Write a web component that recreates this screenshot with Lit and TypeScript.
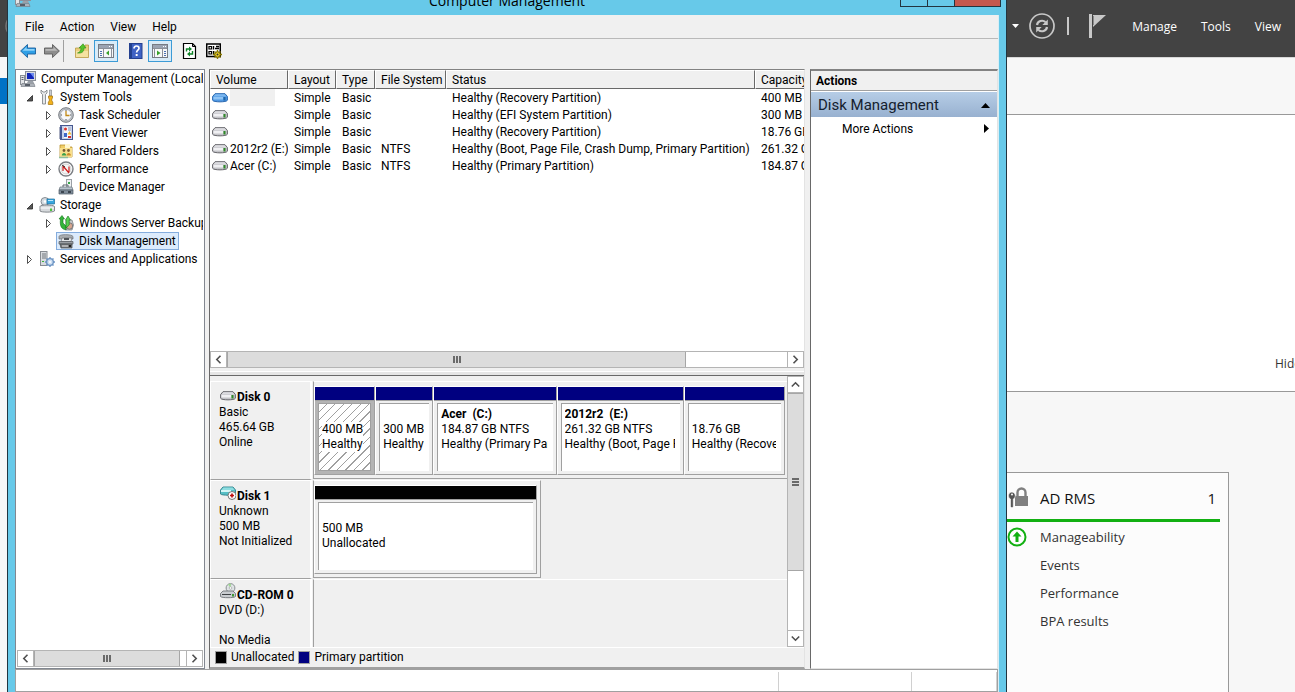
import { LitElement, html, svg, css, nothing } from "lit";
import { customElement, property } from "lit/decorators.js";
import { styleMap } from "lit/directives/style-map.js";
import { classMap } from "lit/directives/class-map.js";

const reset = css`
  * { box-sizing: border-box; }
  button, a {
    font: inherit;
    color: inherit;
    background: none;
    border: 0;
    padding: 0;
    margin: 0;
    text-align: left;
    text-decoration: none;
    white-space: nowrap;
    cursor: default;
  }
  svg { display: block; flex: none; }
  ul { list-style: none; margin: 0; padding: 0; }
`;

const icon = (body: unknown, w = 16, h = 16) =>
  html`<svg width=${w} height=${h} viewBox="0 0 ${w} ${h}" aria-hidden="true">${body}</svg>`;

const icons: Record<string, unknown> = {
  computer: svg`
    <rect x="5.5" y=".5" width="10" height="9" fill="#d9dce2" stroke="#8b909a"/>
    <rect x="7" y="2" width="7" height="6" fill="#1326b8"/><path d="M10 2h4v5z" fill="#6f8cf0"/>
    <path d="M8 10h5l1 2H7z" fill="#9aa0a8"/>
    <rect x=".5" y="4.500" width="4" height="9" fill="#e4e6e9" stroke="#8a8f96"/><path d="M1.500 6.500h2M1.500 8.500h2" stroke="#59606a"/>
    <path d="M2 12.500h12l1 3H1z" fill="#aeb3ba" stroke="#70757d" stroke-width=".6"/><path d="M5 13h5v2H5z" fill="#585e68"/>`,
  tools: svg`
    <path d="M2 1v3l1.500 1.500V15h3V5.500L8 4V1L6 3H4z" fill="#e6e8ea" stroke="#777c82" stroke-width=".8"/>
    <path d="M10.500 1h2v6h-2z" fill="#c9ccd0" stroke="#777c82" stroke-width=".6"/>
    <path d="M9.500 7h4v2l-.7 1v2l1 1v2.500h-4.500V13l1-1v-2l-.8-1z" fill="#f3b21c" stroke="#a06f0a" stroke-width=".7"/>`,
  clock: svg`
    <circle cx="8" cy="8" r="7.300" fill="#c3c7cc" stroke="#74787e"/>
    <circle cx="8" cy="8" r="5.600" fill="#f6f8fb" stroke="#8e949c" stroke-width=".6"/>
    <path d="M8 4v4.500h3.500" fill="none" stroke="#c28a17" stroke-width="1.300"/><path d="M8 3v1M8 12v1M3 8h1M12 8h1" stroke="#555"/>`,
  events: svg`
    <rect x="2.500" y=".5" width="12" height="14" fill="#c9d3ea" stroke="#47588f"/>
    <path d="M2 1h2v13H2z" fill="#5a6fb5"/><path d="M1 3h3M1 5h3M1 7h3M1 9h3M1 11h3M1 13h3" stroke="#263462" stroke-width=".8"/>
    <path d="M6 2h7v11H6z" fill="#f4f6fb"/><circle cx="7.500" cy="4" r="1.500" fill="#d8322b"/><path d="M10 3h3M10 5h3" stroke="#7f8db5"/>
    <path d="M11.500 6l2 3.500h-4z" fill="#f1b929"/><path d="M6 8h3v4H6z" fill="#3f68c9"/><path d="M10 11h3v2h-3z" fill="#d8322b"/>`,
  shared: svg`
    <path d="M2 2h5l1 2h6v10H2z" fill="#f0ce66" stroke="#b78f2c" stroke-width=".8"/><path d="M7 1h5v4H7z" fill="#fff7cf"/>
    <path d="M2 5h12v9H2z" fill="#f8df8c"/>
    <circle cx="6" cy="7.500" r="1.400" fill="#7b5c33"/><circle cx="10.500" cy="7.500" r="1.400" fill="#7b5c33"/>
    <path d="M3.800 12.500c0-3.500 4.400-3.500 4.400 0z" fill="#3aa04b"/><path d="M8.500 12.500c0-3.500 4.400-3.500 4.400 0z" fill="#c98a2a"/>
    <path d="M1 14.500h9" stroke="#8fbf9f" stroke-width="1.500"/>`,
  perf: svg`
    <circle cx="8" cy="8" r="7" fill="#fff" stroke="#7b7e83" stroke-width="1.400"/>
    <circle cx="8" cy="8" r="5" fill="#f5f5f5" stroke="#aaa" stroke-width=".5"/>
    <path d="M5 10V5M5 5l6 7M11 11V5.500" stroke="#cc1d1d" stroke-width="1.200" fill="none"/><path d="M4 4l3 2" stroke="#333"/>`,
  device: svg`
    <rect x="8.500" y=".5" width="5" height="8" fill="#eef0f2" stroke="#9ba0a6"/><rect x="10" y="3" width="2" height="2" fill="#38a748"/>
    <path d="M5 8V6h5v2" fill="none" stroke="#5d666f"/>
    <path d="M2 8h12l1 3H1z" fill="#b9c3cc" stroke="#6b757f" stroke-width=".7"/>
    <path d="M1 11h14v4H1z" fill="#7f8c99" stroke="#4d5964" stroke-width=".7"/><path d="M3 12h3v2H3zM10 12h3v2h-3z" fill="#3c4650"/>`,
  storage: svg`
    <circle cx="6" cy="4.500" r="4" fill="#d5dce2" stroke="#858c93"/><circle cx="6" cy="4.500" r="1.300" fill="#fff"/>
    <path d="M8 2h7.500v5H8z" fill="#39a7dd" stroke="#1c6d9b" stroke-width=".7"/><path d="M9 3h5v1H9z" fill="#bfe7fa"/>
    <path d="M1 9.500c0-2 13-2 14.500 0V14c-1 1.500-13.500 1.500-14.500 0z" fill="#d6d9dc" stroke="#6a6f75" stroke-width=".8"/>
    <path d="M1.500 11h13.500" stroke="#fff"/><rect x="11" y="11.500" width="2" height="2.500" fill="#4cc43f"/>`,
  backup: svg`
    <path d="M8 5h6l1.500 5-1.500 5H8z" fill="#c6c9cd" stroke="#74787d" stroke-width=".7"/><circle cx="11.500" cy="11" r="3.200" fill="#d6a58e" stroke="#6b6e72" stroke-width=".8"/>
    <path d="M1 4l3-3.500L6.500 4H5v4l3 3v4C4 14 1.500 12 2.500 4z" fill="#33b53a" stroke="#15701c" stroke-width=".6"/>
    <path d="M7.500 5L10 1l2.500 4h-1.300v5L8 13V5z" fill="#57d151" stroke="#15701c" stroke-width=".6"/>`,
  disks: svg`
    <path d="M1 3.500C1 1 14 1 15 3.500V6H1z" fill="#a8acb0" stroke="#6d7175" stroke-width=".7"/>
    <path d="M4 5h10l-1 3.500H3z" fill="#e4e6e8" stroke="#6d7175" stroke-width=".7"/><path d="M6 5h5v2H6z" fill="#505459"/>
    <path d="M1 8.500h14V11H1z" fill="#9a9ea3" stroke="#55595e" stroke-width=".7"/>
    <path d="M2 11h12v4H3z" fill="#77797c" stroke="#44474a" stroke-width=".7"/><path d="M4 13h6" stroke="#e8e8e8"/><rect x="11" y="12" width="2" height="2" fill="#222"/>`,
  services: svg`
    <rect x="1.500" y=".5" width="6.500" height="14" fill="#d8dbdf" stroke="#878c92"/><path d="M3 3h4M3 5h4M3 7h4" stroke="#70767d"/><rect x="3" y="10" width="2" height="1" fill="#3eb03a"/>
    <circle cx="11" cy="11" r="3.300" fill="#cfe0f3" stroke="#6b93c3" stroke-width="1.300"/>
    <path d="M11 6v2M11 14v2M6 11h2M14 11h2M7.500 7.500l1.300 1.300M13.200 13.200l1.300 1.300M14.500 7.500l-1.300 1.300M8.800 13.200l-1.300 1.300" stroke="#6b93c3" stroke-width="1.300"/><circle cx="11" cy="11" r="1" fill="#fff"/>`,
  back: svg`<path d="M7.500 1.500L.6 8l6.900 6.500V11h8V5h-8z" fill="#2f9fe6" stroke="#1b5f9c" stroke-width=".9" stroke-linejoin="round"/><path d="M6.500 4L2.600 7.700H14.500V6h-8z" fill="#8fd4fa"/>`,
  forward: svg`<path d="M8.500 1.500L15.400 8l-6.900 6.500V11h-8V5h8z" fill="#8d8d8d" stroke="#5c5c5c" stroke-width=".9" stroke-linejoin="round"/><path d="M9.500 4l3.900 3.700H1.500V6h8z" fill="#b9b9b9"/>`,
  folderUp: svg`<path d="M1.500 5h4l1-1.500H11V2h3.500v12.500h-13z" fill="#e9cf7d" stroke="#b99a45" stroke-width=".8"/><path d="M2 8h12v6H2z" fill="#f5e2a0"/><path d="M3.500 10c2-.5 3.500-2 3.500-5H5L9 .8 12 5h-2c0 4-2.500 5.500-6.500 5z" fill="#55c42c" stroke="#2d8a17" stroke-width=".6"/>`,
  paneLeft: svg`<rect x=".5" y="1.500" width="15" height="13" fill="#f7f8f9" stroke="#767b84"/><path d="M1 2h14v3H1z" fill="#9aa3b2"/><path d="M11 3.500h1M13 3.500h1" stroke="#fff"/><path d="M1 5.500h14M5.500 6v8M13.500 6v8" stroke="#8b9099"/><path d="M2 8.500h2M2 10.500h2M2 12.500h2" stroke="#4a70b0"/><path d="M11 7.500v5l-3-2.500z" fill="#37a02b"/>`,
  paneRight: svg`<rect x=".5" y="1.500" width="15" height="13" fill="#f7f8f9" stroke="#767b84"/><path d="M1 2h14v3H1z" fill="#9aa3b2"/><path d="M11 3.500h1M13 3.500h1" stroke="#fff"/><path d="M1 5.500h14M2.500 6v8M10.500 6v8" stroke="#8b9099"/><path d="M12 8.500h2M12 10.500h2M12 12.500h2" stroke="#4a70b0"/><path d="M5 7.500v5l3.500-2.500z" fill="#37a02b"/>`,
  help: svg`<rect x="1.500" y=".5" width="12.500" height="15" fill="#3f62c4" stroke="#24408f"/><path d="M2 1h2v14H2z" fill="#23418f"/><path d="M6 5.500c0-3.300 5-3.300 5-.3 0 2-2.400 2.100-2.400 4.300" fill="none" stroke="#fff" stroke-width="1.700"/><rect x="7.700" y="11" width="1.900" height="2" fill="#fff"/>`,
  refresh: svg`<path d="M1.500.5h9l3 3v12h-12z" fill="#fff" stroke="#000" stroke-width="1.200"/><path d="M10.500.5v3h3" fill="none" stroke="#000"/><path d="M4.500 8.500V6H8M10.500 8v3H7" fill="none" stroke="#11852a" stroke-width="1.400"/><path d="M7 3.500v5L10 6zM8 8.500v5L5 11z" fill="#11852a"/>`,
  settings: svg`<rect x=".75" y="1" width="13.500" height="12.500" fill="#fff" stroke="#000" stroke-width="1.500"/><path d="M3 3.500h2.500V6H3zM3 8.500h2.500V11H3z" fill="#fff" stroke="#000" stroke-width="1.200"/><path d="M7.500 3v3.500M10 3.500h3M7.500 8v4M9 5.500h4" stroke="#000" stroke-width="1.400"/><circle cx="11.500" cy="11.500" r="2.800" fill="#f0d322" stroke="#4b4300"/><path d="M11.500 7v2M11.500 14v2M7 11.500h2M14 11.500h2M8.500 8.500l1.200 1.200M13.300 13.300l1.300 1.300M14.500 8.500l-1.200 1.200M9.700 13.300l-1.200 1.300" stroke="#8d7c00" stroke-width="1.400"/><circle cx="11.500" cy="11.500" r="1" fill="#333"/>`,
};

const drive = (selected = false) => icon(svg`
  <path d="M3 .7h10L15.400 3.500v3.700c-.6 2.200-14.200 2.200-14.800 0V3.500z" fill=${selected ? "#4f98e3" : "#c3c3c8"} stroke=${selected ? "#2c69b0" : "#66666b"}/>
  <path d="M3.500 1.200h9L14.500 3.500h-13z" fill=${selected ? "#7db8f0" : "#dcdce0"}/>
  <path d="M1.400 4h9.600v2.500H1.400z" fill=${selected ? "#8fc4f5" : "#f0f0f3"}/>
  <rect x="11.500" y="4" width="2" height="3.500" fill=${selected ? "#1f66a8" : "#2f8a28"}/>`, 16, 10);

const diskUnknown = icon(svg`
  <path d="M3 1h10l2.500 3v4c-1 1.600-14 1.600-15 0V4z" fill="#56bfc6" stroke="#2f7f88" stroke-width=".9"/>
  <path d="M3.300 1.500h9.400L14.500 4h-13z" fill="#8edde0"/><path d="M1 5h10" stroke="#d4f6f6" stroke-width="2"/>
  <circle cx="12" cy="9.500" r="4" fill="#fff" stroke="#777"/><path d="M12 7.500v4M10 9.500h4" stroke="#c01010" stroke-width="1.700"/>`, 16, 14);

const cdrom = icon(svg`
  <circle cx="10.500" cy="5" r="4.400" fill="#dfe4e6" stroke="#8b9094"/><path d="M10.500 5L8 1.500a4 4 0 0 1 3-.8z" fill="#9ed88f"/><circle cx="10.500" cy="5" r="1.300" fill="#fff" stroke="#999" stroke-width=".6"/>
  <path d="M3 8h10l2.500 2.500v3c-1 1.600-14 1.600-15 0v-3z" fill="#c9ccd0" stroke="#717479" stroke-width=".9"/>
  <path d="M2 11.500h9" stroke="#3e4145"/><rect x="12" y="11" width="2" height="2.500" fill="#3f9a35"/>`, 16, 16);

const chevron = (d: string) => html`<svg width="9" height="9" viewBox="0 0 9 9" aria-hidden="true"><path d=${d} fill="none" stroke="#505050" stroke-width="1.600"/></svg>`;
const chevrons = {
  left: chevron("M6.500 .8L2.800 4.500l3.700 3.700"),
  right: chevron("M2.500 .8l3.700 3.700-3.700 3.700"),
  up: chevron("M.8 6.500L4.500 2.800l3.700 3.700"),
  down: chevron("M.8 2.500l3.700 3.700 3.700-3.700"),
};

/** Scroll bar with two arrow buttons, a thumb and the remaining track. */
@customElement("scroll-bar")
class ScrollBar extends LitElement {
  @property({ type: Boolean, reflect: true }) vertical = false;
  @property({ type: Number }) ratio = 1;

  static styles = [reset, css`
    :host { display: flex; height: 17px; flex: none; background: #fff; }
    :host([vertical]) { flex-direction: column; width: 17px; height: auto; }
    button, .thumb { display: flex; align-items: center; justify-content: center; border: 1px solid #b4b4b4; }
    button { flex: none; width: 17px; height: 17px; background: #fff; }
    .track { flex: 1; display: flex; min-width: 0; min-height: 0; border: solid #b4b4b4; border-width: 1px 0; }
    :host([vertical]) .track { flex-direction: column; border-width: 0 1px; }
    .thumb { background: #dcdcdc; border-color: #a6a6a6; border-width: 0 1px; gap: 1px; }
    :host([vertical]) .thumb { flex-direction: column; border-width: 1px 0; }
    .grip { width: 2px; height: 7px; background: #6a6a6a; }
    :host([vertical]) .grip { width: 7px; height: 2px; }
  `];

  render() {
    return html`
      <button aria-label="Scroll back">${this.vertical ? chevrons.up : chevrons.left}</button>
      <div class="track">
        <div class="thumb" style=${styleMap({ flexBasis: `${this.ratio}%` })}>
          <span class="grip"></span><span class="grip"></span><span class="grip"></span>
        </div>
      </div>
      <button aria-label="Scroll forward">${this.vertical ? chevrons.down : chevrons.right}</button>`;
  }
}

interface Node { label: string; icon: string; level: number; open?: boolean; selected?: boolean }
const tree: Node[] = [
  { label: "Computer Management (Local)", icon: "computer", level: 0 },
  { label: "System Tools", icon: "tools", level: 1, open: true },
  { label: "Task Scheduler", icon: "clock", level: 2, open: false },
  { label: "Event Viewer", icon: "events", level: 2, open: false },
  { label: "Shared Folders", icon: "shared", level: 2, open: false },
  { label: "Performance", icon: "perf", level: 2, open: false },
  { label: "Device Manager", icon: "device", level: 2 },
  { label: "Storage", icon: "storage", level: 1, open: true },
  { label: "Windows Server Backup", icon: "backup", level: 2, open: false },
  { label: "Disk Management", icon: "disks", level: 2, selected: true },
  { label: "Services and Applications", icon: "services", level: 1, open: false },
];

@customElement("console-tree")
class ConsoleTree extends LitElement {
  static styles = [reset, css`
    :host { display: flex; flex-direction: column; background: #fff; border: 1px solid #828790; padding: 0 1px 1px; overflow: hidden; }
    ul { flex: 1; overflow: hidden; }
    li { display: flex; align-items: center; height: 18px; }
    .l0 { padding-left: 1px; }
    .l1 { padding-left: 6px; }
    .l2 { padding-left: 25px; }
    .twist { flex: none; display: flex; justify-content: center; width: 14px; }
    .node { display: flex; align-items: center; gap: 5px; height: 18px; padding: 0 2px 0 1px; border: 1px solid transparent; }
    .node.on { background: #dcebfc; border-color: #84acdd; }
  `];

  render() {
    return html`
      <ul role="tree">
        ${tree.map((n) => html`
          <li class="l${n.level}" role="treeitem" aria-selected=${n.selected ? "true" : "false"}>
            ${n.level ? html`<span class="twist">${this.twist(n)}</span>` : nothing}
            <button class=${classMap({ node: true, on: !!n.selected })}>${icon(icons[n.icon])}<span>${n.label}</span></button>
          </li>`)}
      </ul>
      <scroll-bar .ratio=${96}></scroll-bar>`;
  }

  private twist(n: Node) {
    if (n.open === undefined) return nothing;
    return n.open
      ? icon(svg`<path d="M6.500 2.500V8H1z" fill="#595959" stroke="#262626" stroke-width=".8"/>`, 8, 9)
      : icon(svg`<path d="M1.500 1.500v8L5.500 5.500z" fill="#fff" stroke="#505050"/>`, 8, 11);
  }
}

const volumes = [
  ["", "Simple", "Basic", "", "Healthy (Recovery Partition)", "400 MB"],
  ["", "Simple", "Basic", "", "Healthy (EFI System Partition)", "300 MB"],
  ["", "Simple", "Basic", "", "Healthy (Recovery Partition)", "18.76 GB"],
  ["2012r2 (E:)", "Simple", "Basic", "NTFS", "Healthy (Boot, Page File, Crash Dump, Primary Partition)", "261.32 GB"],
  ["Acer (C:)", "Simple", "Basic", "NTFS", "Healthy (Primary Partition)", "184.87 GB"],
];

@customElement("volume-list")
class VolumeList extends LitElement {
  static styles = [reset, css`
    :host { display: flex; flex-direction: column; background: #fff; overflow: hidden; }
    .view { flex: 1; overflow: hidden; }
    table { width: 100%; table-layout: fixed; border-collapse: separate; border-spacing: 0; }
    .volume { width: 78px; } .layout { width: 48px; } .type { width: 39px; } .fs { width: 71px; } .capacity { width: 49px; }
    th, td { padding: 0 0 0 6px; font-weight: 400; text-align: left; white-space: nowrap; overflow: hidden; }
    th { height: 19px; line-height: 17px; background: #f0f0f0; border: 1px solid; border-color: #fff #696969 #696969 #fff; padding: 1px 0 0 5px; line-height: 16px; }
    th:last-child { border-right: 0; }
    td { height: 17px; line-height: 16px; padding-top: 1px; }
    td:first-child { padding: 0 0 0 2px; }
    .name { display: flex; align-items: center; height: 17px; gap: 2px; }
    .name .label { padding-top: 1px; }
    .blank { width: 45px; height: 17px; background: #f0f0f0; }
  `];

  render() {
    return html`
      <div class="view">
        <table>
          <colgroup><col class="volume" /><col class="layout" /><col class="type" /><col class="fs" /><col /><col class="capacity" /></colgroup>
          <thead><tr>${["Volume", "Layout", "Type", "File System", "Status", "Capacity"].map((h) => html`<th>${h}</th>`)}</tr></thead>
          <tbody>
            ${volumes.map(([name, ...rest], i) => html`
              <tr>
                <td><div class="name">${drive(i === 0)}${i === 0 ? html`<span class="blank"></span>` : html`<span class="label">${name}</span>`}</div></td>
                ${rest.map((c) => html`<td>${c}</td>`)}
              </tr>`)}
          </tbody>
        </table>
      </div>
      <scroll-bar .ratio=${82}></scroll-bar>`;
  }
}

interface Part { name?: string; size: string; state: string; weight: number; selected?: boolean }
interface Disk { name: string; lines: string[]; icon: unknown; parts: Part[]; kind: string }
const disks: Disk[] = [
  {
    name: "Disk 0", lines: ["Basic", "465.64 GB", "Online"], icon: drive(), kind: "full",
    parts: [
      { size: "400 MB", state: "Healthy", weight: 59, selected: true },
      { size: "300 MB", state: "Healthy", weight: 56 },
      { name: "Acer  (C:)", size: "184.87 GB NTFS", state: "Healthy (Primary Partition)", weight: 121 },
      { name: "2012r2  (E:)", size: "261.32 GB NTFS", state: "Healthy (Boot, Page File, Crash Dump)", weight: 125 },
      { size: "18.76 GB", state: "Healthy (Recovery Partition)", weight: 99 },
    ],
  },
  { name: "Disk 1", lines: ["Unknown", "500 MB", "Not Initialized"], icon: diskUnknown, kind: "short", parts: [{ size: "500 MB", state: "Unallocated", weight: 1 }] },
  { name: "CD-ROM 0", lines: ["DVD (D:)", "", "No Media"], icon: cdrom, kind: "none", parts: [] },
];

@customElement("disk-map")
class DiskMap extends LitElement {
  static styles = [reset, css`
    :host { display: flex; flex-direction: column; background: #f0f0f0; overflow: hidden; line-height: 15px; }
    .body { flex: 1; display: flex; min-height: 0; }
    .rows { flex: 1; min-width: 0; padding-top: 5px; overflow: hidden; }
    .row { display: flex; height: 99px; }
    .info { flex: none; width: 102px; padding: 8px 0 0 8px; border: solid; border-width: 1px 2px 1px 1px; border-color: #fff #fff #a0a0a0 #fff; white-space: nowrap; }
    .info p { margin: 0; height: 15px; }
    .head { display: flex; align-items: flex-end; height: 15px; font-weight: 700; }
    .head svg { margin: 0 1px 4px; }
    .strip { display: flex; flex: 1; min-width: 0; margin-left: 1px; padding: 4px 2px 3px 0; border: solid; border-width: 1px 0 1px 1px; border-color: #fff #a0a0a0 #a0a0a0 #a0a0a0; }
    .full { margin-bottom: 1px; }
    .short { flex: none; width: 228px; padding-right: 3px; border-right-width: 1px; margin-bottom: 1px; }
    .none { border-bottom-width: 0; }
    .part { display: flex; flex-direction: column; min-width: 0; height: 89px; border: solid; border-color: #fff #a0a0a0 #a0a0a0 #fff; border-width: 1px; }
    .bar { flex: none; height: 14px; background: #000080; border-bottom: 1px solid #a0a0a0; }
    .short .bar { background: #000; }
    .box { flex: 1; min-height: 0; margin: 2px 3px 3px; padding: 3px 5px 0 3px; background: #fff; border: solid #a0a0a0; border-width: 1px 0 0 1px; }
    .box span { display: block; height: 15px; overflow: hidden; white-space: pre; }
    .title { font-weight: 700; }
    .on { background: #b4b4b4; }
    .on .box {
      border-width: 1px;
      background: repeating-linear-gradient(135deg, #fff 0 5px, #a0a0a0 5px 6px);
      padding-right: 2px;
    }
    .on .size, .on .state { background: #fff; width: fit-content; max-width: 100%; }
    .legend { display: flex; align-items: center; gap: 4px; height: 20px; padding: 0 0 1px 5px; border-top: 1px solid #fff; }
    .key { width: 12px; height: 13px; border: 1px solid #a0a0a0; background: #000; }
    .key.primary { background: #000080; }
  `];

  render() {
    return html`
      <div class="body">
        <div class="rows">
          ${disks.map((d) => html`
            <section class="row">
              <div class="info">
                <div class="head">${d.icon}<span>${d.name}</span></div>
                ${d.lines.map((l) => html`<p>${l}</p>`)}
              </div>
              <div class="strip ${d.kind}">
                ${d.parts.map((p) => html`
                  <button class=${classMap({ part: true, on: !!p.selected })} style=${styleMap({ flex: `${p.weight} 1 0` })}>
                    <span class="bar"></span>
                    <span class="box"><span class="title">${p.name ?? ""}</span><span class="size">${p.size}</span><span class="state">${p.state}</span></span>
                  </button>`)}
              </div>
            </section>`)}
        </div>
        <scroll-bar vertical .ratio=${75}></scroll-bar>
      </div>
      <div class="legend"><span class="key"></span>Unallocated<span class="key primary"></span>Primary partition</div>`;
  }
}

@customElement("management-window")
class ManagementWindow extends LitElement {
  static styles = [reset, css`
    :host { display: flex; flex-direction: column; background: #67c9e9; border: solid #22343f; border-width: 0 1px; padding: 0 7px; color: #000; font-family: Roboto, "Open Sans", sans-serif; font-size: 12px; line-height: 16px; }
    .title { display: grid; grid-template-columns: 1fr auto 1fr; align-items: center; flex: none; height: 32px; }
    .title h1 { margin: 0; font-family: "Open Sans", sans-serif; font-size: 14px; font-weight: 400; line-height: 20px; padding-top: 4px; }
    .caption { display: flex; justify-self: end; align-self: start; height: 24px; margin-right: -2px; border: 1px solid #22343f; }
    .caption button { width: 27px; border-right: 1px solid #22343f; }
    .caption .close { width: 45px; border: 0; background: #c4584e; }
    .frame { flex: 1; display: flex; flex-direction: column; min-height: 0; background: #f0f0f0; border-right: 1px solid #d8eef5; }
    .menu { display: flex; gap: 16px; align-items: center; flex: none; height: 24px; padding-left: 10px; border-bottom: 1px solid #b9b9b9; }
    .tools { display: flex; align-items: center; flex: none; height: 30px; padding: 0 5px 6px; gap: 4px; }
    .tools hr { width: 1px; height: 22px; margin: 0 6px 0 -1px; border: 0; background: #a0a0a0; }
    .toggle { padding: 2px 3px; border: 1px solid #3c9bd6; background: #d8ebf8; margin-right: 6px; }
    .group { display: flex; align-items: center; gap: 8px; }
    .tight { gap: 4px; }
    .panes { flex: 1; display: grid; grid-template-columns: 190px minmax(0, 1fr) 188px; column-gap: 4px; min-height: 0; }
    console-tree { min-height: 0; }
    .middle { display: flex; flex-direction: column; min-height: 0; margin-right: 1px; border: solid; border-width: 1px 1px 2px 1px; border-color: #828282 #e3e3e3 #a0a0a0 #696969; }
    volume-list { flex: 0 1 calc(50% - 1px); }
    .split { flex: none; height: 8px; border: solid; border-color: #696969; border-width: 0 0 1px; box-shadow: inset 0 -3px #e6e6e6, inset 0 -4px #fff; background: #f0f0f0; }
    disk-map { flex: 1; min-height: 0; }
    .actions { background: #fff; border: solid; border-color: #828282 #e3e3e3 #e3e3e3 #696969; border-width: 2px 1px 1px 1px; }
    .actions h2 { margin: 0; height: 20px; padding-left: 5px; font-size: 12px; line-height: 20px; background: #f0f0f0; border-bottom: 1px solid #a0a0a0; }
    .head { display: flex; align-items: center; justify-content: space-between; width: 100%; height: 25px; margin-top: 1px; padding: 1px 7px 0; font-size: 15px; color: #14202e; background: linear-gradient(#b6cde6, #98b1d0); }
    .more { display: flex; align-items: center; justify-content: space-between; width: 100%; height: 23px; padding: 0 8px 0 31px; }
    .status { display: flex; justify-content: flex-end; flex: none; height: 23px; background: #fff; border: 1px solid #a0a0a0; padding: 2px 0 0; }
    .status span { border-right: 1px solid #d0d0d0; width: 85px; }
    .status .first { width: 1px; }
    .status .second { width: 133px; }
  `];

  render() {
    const tool = (name: string, label: string, toggled = false) =>
      html`<button class=${toggled ? "toggle" : ""} aria-label=${label}>${icon(icons[name])}</button>`;
    return html`
      <header class="title">
        ${icon(icons.computer)}
        <h1>Computer Management</h1>
        <div class="caption"><button aria-label="Minimize"></button><button aria-label="Maximize"></button><button class="close" aria-label="Close"></button></div>
      </header>
      <div class="frame">
        <nav class="menu">${["File", "Action", "View", "Help"].map((m) => html`<button>${m}</button>`)}</nav>
        <div class="tools">
          <div class="group">${tool("back", "Back")}${tool("forward", "Forward")}</div>
          <hr />
          <div class="group tight">${tool("folderUp", "Up one level")}${tool("paneLeft", "Console tree", true)}${tool("help", "Help")}${tool("paneRight", "Action pane", true)}</div>
          <div class="group">${tool("refresh", "Refresh")}${tool("settings", "Settings")}</div>
        </div>
        <div class="panes">
          <console-tree></console-tree>
          <div class="middle"><volume-list></volume-list><div class="split"></div><disk-map></disk-map></div>
          <aside class="actions">
            <h2>Actions</h2>
            <button class="head">Disk Management${icon(svg`<path d="M0 5h9L4.500 0z" fill="#000"/>`, 9, 5)}</button>
            <button class="more">More Actions${icon(svg`<path d="M0 0v9l5-4.500z" fill="#000"/>`, 5, 9)}</button>
          </aside>
        </div>
        <footer class="status"><span class="first"></span><span class="second"></span><span></span></footer>
      </div>`;
  }
}

@customElement("app-root")
class AppRoot extends LitElement {
  static styles = [reset, css`
    :host { display: block; position: relative; height: 100vh; overflow: hidden; font-family: "Open Sans", "Noto Sans", sans-serif; background: #f7f7f7; }
    .server { display: flex; flex-direction: column; height: 100%; }
    .top { display: flex; align-items: center; flex: none; height: 57px; padding: 0 14px 5px 5px; background: #434343; color: #fff; font-size: 12px; line-height: 18px; }
    .top .lead { flex: 1; }
    .cmds { display: flex; align-items: center; margin-right: 25px; }
    .cmds svg { margin-right: 10px; }
    .cmds i { width: 2px; height: 18px; margin: 0 20px 0 2px; background: #c8c8c8; }
    .cmds .flag { margin: 0; }
    .links { display: flex; gap: 24px; padding-top: 2px; }
    .body { display: grid; grid-template-columns: 8px minmax(0, 1fr); flex: 1; min-height: 0; }
    .side { background: #f7f7f7; }
    .band { height: 58px; border-top: 1px solid #d8d8d8; border-bottom: 1px solid #999; background: #f7f7f7; }
    .welcome { display: flex; align-items: flex-end; height: 277px; padding: 0 0 18px calc(100% - 20px); background: #fff; border-bottom: 1px solid #999; font-size: 12px; line-height: 18px; color: #333; overflow: hidden; }
    .card { width: 245px; height: 100%; margin: 80px 66px 0 auto; padding: 6px 8px 0 0; background: #fcfcfc; border: 1px solid #999; color: #333; font-size: 13px; line-height: 18px; }
    .card h2 { display: flex; align-items: center; height: 43px; margin: 0; padding: 0 4px 6px 23px; font-size: 15px; font-weight: 400; color: #111; }
    .card h2 span { flex: 1; padding-left: 12px; }
    .card ul { border-top: 3px solid #12b012; padding: 1px 0 0 22px; margin-top: -3px; }
    .card li { display: flex; align-items: center; gap: 13px; height: 28px; }
    .card li:not(:first-child) { padding-left: 33px; }
    .nav { position: absolute; left: 0; top: 78px; width: 7px; height: 26px; background: #0072c6; }
    management-window { position: absolute; left: 7px; right: 288px; top: -17px; bottom: 0; }
  `];

  render() {
    return html`
      <div class="server">
        <header class="top">
          <div class="lead">${icon(svg`<circle cx="13" cy="13" r="12" fill="none" stroke="#777" stroke-width="1.500"/>`, 26, 26)}</div>
          <div class="cmds">
            ${icon(svg`<path d="M0 0h7L3.500 4z" fill="#fff"/>`, 7, 4)}
            ${icon(svg`
              <circle cx="13" cy="13" r="12" fill="none" stroke="#c8c8c8" stroke-width="1.700"/>
              <path d="M8 12c.5-4 5.500-5.500 8.500-3M18 14c-.5 4-5.500 5.500-8.500 3" fill="none" stroke="#c8c8c8" stroke-width="2.200"/>
              <path d="M18.800 6.500v5.500h-5.500zM7.200 19.500V14h5.500z" fill="#c8c8c8"/>`, 26, 26)}
            <i></i>
            <svg class="flag" width="18" height="24" viewBox="0 0 18 24" aria-hidden="true"><path d="M0 0h3v24H0z" fill="#c8c8c8"/><path d="M4 1h13L4 13z" fill="#c8c8c8"/><path d="M4.500 2v9" stroke="#8a8a8a"/></svg>
          </div>
          <nav class="links"><button>Manage</button><button>Tools</button><button>View</button></nav>
        </header>
        <div class="body">
          <div class="side"></div>
          <main>
            <div class="band"></div>
            <div class="welcome"><button>Hide</button></div>
            <section class="card">
              <h2>
                ${icon(svg`
                  <path d="M7 9h13v10H7z" fill="#808080"/><path d="M9.500 9V5.500a4 4 0 0 1 8 0V9" fill="none" stroke="#808080" stroke-width="2.400"/>
                  <path d="M4 5a3.700 3.700 0 0 1 1.300 7v7.500L4 21l-1.500-1.500V12A3.700 3.700 0 0 1 4 5z" fill="#555" stroke="#fcfcfc" stroke-width=".6"/><circle cx="4" cy="7.500" r="1" fill="#fcfcfc"/>`, 20, 22)}
                <span>AD RMS</span>1
              </h2>
              <ul>
                <li>${icon(svg`<circle cx="10" cy="10" r="8.500" fill="#fff" stroke="#12b012" stroke-width="2"/><path d="M10 4.500l4.500 5h-3V15h-3V9.500h-3z" fill="#12b012"/>`, 20, 20)}<a href="#manageability">Manageability</a></li>
                <li><a href="#events">Events</a></li>
                <li><a href="#performance">Performance</a></li>
                <li><a href="#bpa">BPA results</a></li>
              </ul>
            </section>
          </main>
        </div>
      </div>
      <div class="nav"></div>
      <management-window></management-window>`;
  }
}
